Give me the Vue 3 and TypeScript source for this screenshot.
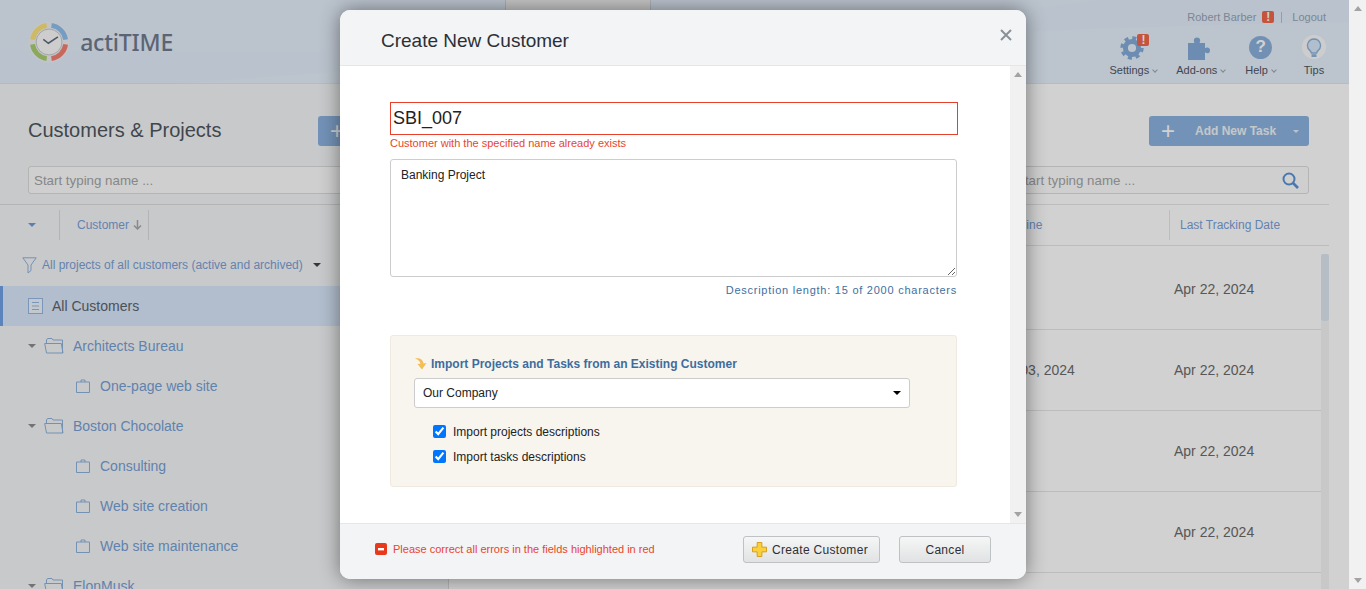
<template>
  <div class="app">
    <div class="page">
      <header class="top">
        <svg class="swoosh" width="1349" height="84" viewBox="0 0 1349 84">
          <path d="M170 84C500 60 900 30 1349 22V84z" fill="#fff" opacity=".12" />
          <path d="M0 50C400 60 800 40 1100 0H0z" fill="#fff" opacity=".05" />
        </svg>
        <div class="logo">
          <svg width="44" height="44" viewBox="0 0 44 44">
            <circle cx="22" cy="22" r="21.5" fill="#eef0f3" />
            <g fill="none" stroke-width="5">
              <path d="M4.7 19.5A17.5 17.5 0 0 1 19.5 4.7" stroke="#fce27a" />
              <path d="M24.5 4.7A17.5 17.5 0 0 1 39.3 19.5" stroke="#8fc0ef" />
              <path d="M39.3 24.5A17.5 17.5 0 0 1 24.5 39.3" stroke="#f47f72" />
              <path d="M19.5 39.3A17.5 17.5 0 0 1 4.7 24.5" stroke="#a9cf70" />
            </g>
            <circle cx="22" cy="22" r="13.5" fill="#fafafa" stroke="#c4c8cd" />
            <path d="M16 19.3l5.3 4 10-6.6" fill="none" stroke="#5f6b80" stroke-width="1.6" />
          </svg>
          <span class="logo-name">actiTIME</span>
        </div>
        <div class="top-tab"></div>
        <div class="top-right">
          <div class="user-line">
            <span>Robert Barber</span>
            <i class="alert">!</i>
            <em class="sep"></em>
            <span>Logout</span>
          </div>
          <div class="tools">
            <div class="tool">
              <div class="tool-icon">
                <svg width="26" height="26" viewBox="0 0 26 26">
                  <g fill="none" stroke="#84abd8" transform="translate(12 14)">
                    <circle r="6.6" stroke-width="5" />
                    <circle r="10" stroke-width="3.4" stroke-dasharray="4 3.85" />
                  </g>
                </svg>
                <i class="alert gear-alert">!</i>
              </div>
              <span>Settings <b class="mini-caret"></b></span>
            </div>
            <div class="tool">
              <div class="tool-icon">
                <svg class="puzzle" width="26" height="26" viewBox="0 0 26 26">
                  <path d="M3 9h6.2c.6 0-.4-1-.4-2.600C8.800 4.500 10.200 3.500 12 3.500s3.200 1 3.200 3c0 1.600-1 2.500-.4 2.500H20v5c0 .7 1-.5 2.300-.5 1.600 0 2.700 1.200 2.700 2.900s-1.100 2.900-2.700 2.900c-1.300 0-2.300-1.200-2.300-.5V26H3z" fill="#84abd8" />
                </svg>
              </div>
              <span>Add-ons <b class="mini-caret"></b></span>
            </div>
            <div class="tool">
              <div class="tool-icon">
                <span class="help-dot">?</span>
              </div>
              <span>Help <b class="mini-caret"></b></span>
            </div>
            <div class="tool tips">
              <div class="tool-icon">
                <span class="tips-dot">
                  <svg width="16" height="19" viewBox="0 0 16 19">
                    <path d="M8 1a6.500 6.500 0 0 0-4 11.600c.8.700 1.200 1.400 1.300 2.400h5.400c.1-1 .5-1.700 1.300-2.400A6.500 6.500 0 0 0 8 1z" fill="#d7e8fa" stroke="#8fb4dc" stroke-width="1.400" />
                    <path d="M5.500 16.200h5V19h-5z" fill="#8fb4dc" />
                  </svg>
                </span>
              </div>
              <span>Tips</span>
            </div>
          </div>
        </div>
      </header>

      <main class="content">
        <aside class="left">
          <div class="left-head">
            <h1>Customers &amp; Projects</h1>
            <button class="add-btn small"><span class="plus">+</span></button>
          </div>
          <div class="search">Start typing name ...</div>
          <div class="sort-row">
            <b class="caret blue"></b>
            <em class="col-line first"></em>
            <span class="sort-name">Customer</span>
            <svg width="9" height="10" viewBox="0 0 9 10"><path d="M4.500 0v9M1 5.500l3.500 3.500L8 5.500" fill="none" stroke="#a5a9ae" stroke-width="1.500" /></svg>
            <em class="col-line"></em>
          </div>
          <div class="filter-row">
            <svg width="15" height="17" viewBox="0 0 15 17"><path d="M.8.800h13.400L9 8v5.500L6 16V8z" fill="none" stroke="#8db1dc" /></svg>
            <span>All projects of all customers (active and archived)</span>
            <b class="caret dark"></b>
          </div>
          <div class="tree-row active">
            <svg width="15" height="16" viewBox="0 0 15 16">
              <rect x=".5" y=".5" width="14" height="15" fill="#eef5fd" stroke="#95b9e2" />
              <path d="M4 4.500h7M4 8h7M4 11.500h7" stroke="#95b9e2" />
            </svg>
            <span>All Customers</span>
          </div>
          <div v-for="row in tree" :key="row.name" class="tree-row" :class="row.project ? 'project' : 'customer'">
            <template v-if="!row.project">
              <b class="caret gray"></b>
              <svg width="20" height="16" viewBox="0 0 20 16">
                <path d="M2.500 15L.7 5.500h16.600L19 15zM2.500 5.500V2l1-1.500h4.500l1 1.500h9.500v13" fill="none" stroke="#8db1dc" />
              </svg>
            </template>
            <svg v-else width="14" height="14" viewBox="0 0 14 14">
              <path d="M.5 3h13v10.500H.5zM5 3V1h4v2" fill="none" stroke="#8db1dc" />
            </svg>
            <span>{{ row.name }}</span>
          </div>
        </aside>

        <section class="right">
          <div class="right-tools">
            <button class="add-btn">
              <span class="plus">+</span>
              <span class="add-label">Add New Task</span>
              <b class="solid-caret"></b>
            </button>
          </div>
          <div class="search right-search">
            <span>Start typing name ...</span>
            <svg width="17" height="17" viewBox="0 0 17 17"><circle cx="7" cy="7" r="5.500" fill="none" stroke="#5a93d6" stroke-width="2" /><path d="M11 11l5 5" stroke="#5a93d6" stroke-width="2.600" /></svg>
          </div>
          <div class="grid-head">
            <span class="grid-col">Deadline</span>
            <span class="grid-col last">Last Tracking Date</span>
          </div>
          <div class="grid-body">
            <div class="rows">
              <div v-for="row in dates" :key="row.id" class="grid-row">
                <span>{{ row.deadline }}</span>
                <span>{{ row.tracked }}</span>
              </div>
            </div>
            <div class="grid-scroll"><div class="grid-thumb"></div></div>
          </div>
        </section>
      </main>

      <div class="overlay"></div>

      <div class="dialog">
        <div class="dialog-head">
          <h2>Create New Customer</h2>
          <svg class="close" width="12" height="12" viewBox="0 0 12 12"><path d="M1 1l10 10M11 1L1 11" stroke="#8b9098" stroke-width="2" /></svg>
        </div>
        <div class="dialog-body">
          <form class="form" @submit.prevent>
            <input v-model="customerName" class="name-input" type="text" />
            <div class="error-text">Customer with the specified name already exists</div>
            <textarea v-model="description" class="desc"></textarea>
            <div class="desc-count">Description length: {{ description.length }} of 2000 characters</div>

            <div class="import-box">
              <div class="import-title">
                <svg width="14" height="14" viewBox="0 0 14 14"><path d="M1 1.500C5 .5 9 2 9.500 6.500L12.500 6 8 12.500 3.500 7l3 -.2C6.200 4.500 4.500 2.500 1 1.500z" fill="#f5bd55" /></svg>
                <span>Import Projects and Tasks from an Existing Customer</span>
              </div>
              <div class="select-wrap">
                <select v-model="importFrom" class="import-select">
                  <option>Our Company</option>
                </select>
                <b class="select-arrow"></b>
              </div>
              <label class="check"><input v-model="importProjects" type="checkbox" /> Import projects descriptions</label>
              <label class="check"><input v-model="importTasks" type="checkbox" /> Import tasks descriptions</label>
            </div>
          </form>
          <div class="dialog-scroll">
            <b class="arrow up"></b>
            <b class="arrow down"></b>
          </div>
        </div>
        <div class="dialog-foot">
          <svg class="foot-icon" width="12" height="12" viewBox="0 0 12 12"><rect width="12" height="12" rx="2" fill="#e8391c" /><rect x="3" y="5" width="6" height="2.400" fill="#fff" /></svg>
          <span class="foot-error">Please correct all errors in the fields highlighted in red</span>
          <button class="btn create">
            <svg width="15" height="15" viewBox="0 0 16 16"><path d="M5.500.5h5v5h5v5h-5v5h-5v-5h-5v-5h5z" fill="#fbd13b" stroke="#d99a10" /></svg>
            Create Customer
          </button>
          <button class="btn cancel">Cancel</button>
        </div>
      </div>
    </div>

    <div class="page-scroll">
      <b class="arrow up"></b>
      <b class="arrow down"></b>
    </div>
  </div>
</template>

<script setup lang="ts">
import { ref } from 'vue'

const customerName = ref('SBI_007')
const description = ref('Banking Project')
const importFrom = ref('Our Company')
const importProjects = ref(true)
const importTasks = ref(true)

const tree = [
  { name: 'Architects Bureau', project: false },
  { name: 'One-page web site', project: true },
  { name: 'Boston Chocolate', project: false },
  { name: 'Consulting', project: true },
  { name: 'Web site creation', project: true },
  { name: 'Web site maintenance', project: true },
  { name: 'ElonMusk', project: false }
]

const dates = [
  { id: 1, deadline: '', tracked: 'Apr 22, 2024' },
  { id: 2, deadline: 'May 03, 2024', tracked: 'Apr 22, 2024' },
  { id: 3, deadline: '', tracked: 'Apr 22, 2024' },
  { id: 4, deadline: '', tracked: 'Apr 22, 2024' }
]
</script>

<style scoped>
.app { width: 1366px; height: 589px; display: flex; overflow: hidden; font-family: "Liberation Sans", Arial, sans-serif; background: #fff; }
.page { position: relative; width: 1349px; height: 589px; overflow: hidden; background: #fff; }
.page-scroll { width: 17px; background: #f1f1f1; display: flex; flex-direction: column; justify-content: space-between; align-items: center; padding: 6px 0; box-sizing: border-box; }

.arrow { width: 0; height: 0; border-left: 4px solid transparent; border-right: 4px solid transparent; }
.arrow.up { border-bottom: 5px solid #a3a3a3; }
.arrow.down { border-top: 5px solid #a3a3a3; }

.top { position: relative; height: 84px; box-sizing: border-box; display: flex; padding-left: 28px; border-bottom: 1px solid #dbe3ec; background: #e3eefb; }
.swoosh { position: absolute; left: 0; top: 0; }
.logo { position: relative; width: 145px; flex: none; display: flex; align-items: center; gap: 10px; height: 84px; }
.logo-name { font-family: "Noto Sans", sans-serif; font-size: 23px; font-weight: 500; color: #707b8e; letter-spacing: -.2px; }
.top-tab { position: relative; width: 146px; height: 84px; margin-left: 332px; box-sizing: border-box; background: #f1f1f1; border: 1px solid #cfd6df; border-top: 0; }
.top-right { position: relative; margin-left: auto; padding-right: 23px; display: flex; flex-direction: column; align-items: flex-end; }
.user-line { display: flex; align-items: center; height: 14px; margin-top: 10px; font-size: 11px; color: #99a4b2; }
.alert { display: inline-flex; align-items: center; justify-content: center; width: 12px; height: 12px; border-radius: 2px; background: #f0674a; color: #fff; font-size: 12px; font-weight: 700; font-style: normal; }
.user-line .alert { margin-left: 6px; }
.sep { width: 1px; height: 11px; background: #b6c3d2; margin: 0 10px 0 7px; }
.tools { display: flex; margin-top: 10px; }
.tool { display: flex; flex-direction: column; align-items: center; font-size: 11px; color: #4e5664; margin-left: 19px; }
.tool:nth-child(3) { margin-left: 20px; }
.tool.tips { margin-left: 26px; }
.tool-icon { position: relative; height: 26px; margin-bottom: 4px; display: flex; align-items: center; justify-content: center; }
.gear-alert { position: absolute; top: 0; right: -3px; }
.puzzle { margin-right: 6px; }
.help-dot { width: 23px; height: 23px; border-radius: 50%; background: #8cb0dc; color: #fff; font-size: 17px; font-weight: 700; display: flex; align-items: center; justify-content: center; }
.tips-dot { width: 24px; height: 24px; border-radius: 50%; background: #fbfbfb; display: flex; align-items: center; justify-content: center; }
.mini-caret { display: inline-block; width: 3px; height: 3px; vertical-align: 2px; margin-left: 1px; border-right: 1px solid #9aa5b2; border-bottom: 1px solid #9aa5b2; transform: rotate(45deg); }
.solid-caret { display: inline-block; width: 0; height: 0; border-left: 3px solid transparent; border-right: 3px solid transparent; border-top: 3px solid #e5edf6; }

.content { display: flex; height: 505px; }
.left { width: 449px; flex: none; box-sizing: border-box; background: #f5f6f7; border-right: 1px solid #dcdcdc; overflow: hidden; }
.left-head { display: flex; align-items: center; justify-content: space-between; height: 30px; margin-top: 32px; padding-left: 28px; }
.left-head h1 { margin: 0 0 2px; font-size: 20px; font-weight: 400; color: #4f5660; }
.add-btn { height: 30px; border: 0; border-radius: 3px; background: #8db3e0; color: #fff; font-family: inherit; display: flex; align-items: center; padding: 0; }
.add-btn.small { width: 130px; padding-left: 12px; }
.plus { font-size: 24px; line-height: 30px; font-weight: 400; }
.add-btn:not(.small) { width: 160px; padding: 0 10px 0 12px; box-sizing: border-box; }
.add-label { flex: 1; padding-left: 20px; font-size: 12px; font-weight: 700; text-align: left; color: #f1f4f7; }
.search { height: 28px; box-sizing: border-box; margin-top: 20px; margin-left: 28px; border: 1px solid #dcdcdc; border-radius: 3px; background: #fdfdfd; color: #a5a5a5; font-size: 13.333px; line-height: 28px; padding-left: 5px; }
.sort-row { height: 41px; box-sizing: border-box; margin-top: 10px; border-top: 1px solid #dcdcdc; padding-left: 28px; display: flex; align-items: center; font-size: 12px; color: #7aa0d8; }
.col-line { width: 1px; height: 30px; background: #dcdcdc; margin-left: 6px; }
.col-line.first { margin-left: 23px; margin-right: 17px; }
.sort-name { margin-right: 4px; }
.caret { display: inline-block; width: 0; height: 0; border-left: 4px solid transparent; border-right: 4px solid transparent; border-top: 4px solid; }
.caret.blue { border-top-color: #6f9bd6; }
.caret.dark { border-top-color: #444; margin-left: 10px; }
.caret.gray { border-top-color: #8d8d8d; }
.filter-row { height: 41px; box-sizing: border-box; padding-bottom: 1px; display: flex; align-items: center; padding-left: 22px; font-size: 12px; color: #7aa0d8; }
.filter-row span { margin-left: 5px; }
.tree-row { height: 40px; display: flex; align-items: center; font-size: 14px; color: #769fd5; }
.tree-row.active { background: #dae8fa; border-left: 3px solid #6fa3e3; padding-left: 25px; color: #5d636c; }
.tree-row.active span { margin-left: 9px; }
.tree-row.customer { padding-left: 28px; }
.tree-row.customer svg { margin-left: 8px; }
.tree-row.customer span { margin-left: 9px; }
.tree-row.project { padding-left: 76px; }
.tree-row.project span { margin-left: 10px; }

.right { flex: 1; min-width: 0; background: #fff; }
.right-tools { display: flex; justify-content: flex-end; padding: 32px 40px 0 0; }
.right-search { width: 299px; margin-left: auto; margin-right: 40px; display: flex; align-items: center; justify-content: space-between; padding-right: 9px; }
.right-search span { padding-top: 1px; }
.grid-head { height: 42px; box-sizing: border-box; margin: 10px 20px 0 0; border-top: 1px solid #e6e6e6; border-bottom: 1px solid #e6e6e6; display: grid; grid-template-columns: 546px 174px 1fr; align-items: center; font-size: 12px; color: #7aa0d8; }
.grid-col:first-child { grid-column: 2; }
.grid-col.last { border-left: 1px solid #e6e6e6; height: 30px; line-height: 30px; padding-left: 10px; }
.grid-body { display: flex; margin-right: 20px; }
.rows { flex: 1; padding-top: 3px; }
.grid-row { height: 81px; box-sizing: border-box; border-bottom: 1px solid #e6e6e6; display: grid; grid-template-columns: 725px 1fr; padding-left: 0; align-items: center; font-size: 14px; color: #6b6b6b; }
.grid-row span:first-child { padding-left: 541px; }
.grid-scroll { width: 8px; margin-top: 8px; background: #f4f4f4; height: 340px; }
.grid-thumb { height: 67px; border-radius: 3px; background: #dfe7ef; }

.overlay { position: absolute; inset: 0; background: rgba(0, 0, 0, .18); }

.dialog { position: absolute; left: 340px; top: 10px; width: 686px; height: 569px; border-radius: 10px; overflow: hidden; background: #fff; box-shadow: 0 0 20px rgba(0, 0, 0, .45); display: flex; flex-direction: column; }
.dialog-head { height: 56px; flex: none; box-sizing: border-box; background: #f3f4f6; border-bottom: 1px solid #e6e6e6; display: flex; align-items: center; justify-content: space-between; padding: 11px 14px 5px 41px; }
.dialog-head h2 { margin: 0; font-size: 19px; font-weight: 400; color: #2b3036; }
.close { margin-top: -11px; }
.dialog-body { flex: 1; min-height: 0; display: flex; }
.form { flex: 1; padding: 36px 52px 0 50px; min-width: 0; }
.dialog-scroll { width: 16px; background: #f1f1f1; display: flex; flex-direction: column; justify-content: space-between; align-items: center; padding: 6px 0; box-sizing: border-box; }
.name-input { display: block; width: 568px; height: 33px; box-sizing: border-box; margin: 0; border: 1px solid #e8402a; padding: 0 2px; outline: 0; font-family: inherit; font-size: 18px; color: #222; }
.error-text { height: 24px; padding-top: 1px; box-sizing: border-box; font-size: 11px; line-height: 14px; color: #e8452c; }
.desc { display: block; width: 567px; height: 118px; box-sizing: border-box; margin: 0; border: 1px solid #ccc; border-radius: 3px; padding: 8px 10px; outline: 0; font-family: inherit; font-size: 12px; line-height: 14px; color: #222; }
.desc-count { width: 567px; margin-top: 6px; font-size: 11px; line-height: 14px; text-align: right; letter-spacing: .75px; color: #3e6f9f; }
.import-box { width: 567px; height: 152px; box-sizing: border-box; margin-top: 38px; padding: 20px 23px 0; border: 1px solid #efe9df; border-radius: 3px; background: #f8f5ef; }
.import-title { display: flex; align-items: center; gap: 3px; font-size: 12px; font-weight: 700; color: #3d6d9e; height: 16px; }
.select-wrap { position: relative; width: 496px; margin-top: 6px; }
.import-select { display: block; width: 100%; height: 30px; box-sizing: border-box; appearance: none; border: 1px solid #ccc; border-radius: 3px; background: #fff; padding-left: 8px; outline: 0; font-family: inherit; font-size: 12px; color: #222; }
.select-arrow { position: absolute; right: 9px; top: 13px; width: 0; height: 0; border-left: 4px solid transparent; border-right: 4px solid transparent; border-top: 4px solid #000; }
.check { display: flex; align-items: center; height: 25px; padding-left: 19px; font-size: 12px; color: #222; }
.check input { margin: 0 7px 0 0; }
.select-wrap + .check { margin-top: 11px; }
.dialog-foot { height: 56px; flex: none; box-sizing: border-box; background: #f3f4f6; border-top: 1px solid #e6e6e6; display: flex; align-items: center; padding: 0 35px 4px 35px; }
.foot-icon { margin-bottom: 1px; }
.foot-error { margin: 0 0 1px 6px; font-size: 11px; color: #e8452c; }
.btn { height: 27px; box-sizing: border-box; border: 1px solid #bfc2c5; border-radius: 3px; background: linear-gradient(#f5f6f6, #e1e2e3); font-family: inherit; font-size: 12px; letter-spacing: .3px; color: #2c3036; display: flex; align-items: center; justify-content: center; padding: 0; }
.btn.create { width: 137px; margin-left: auto; gap: 5px; padding-right: 3px; }
.btn.cancel { width: 92px; margin-left: 19px; }
</style>

<style>
html, body { margin: 0; overflow: hidden; }
</style>
